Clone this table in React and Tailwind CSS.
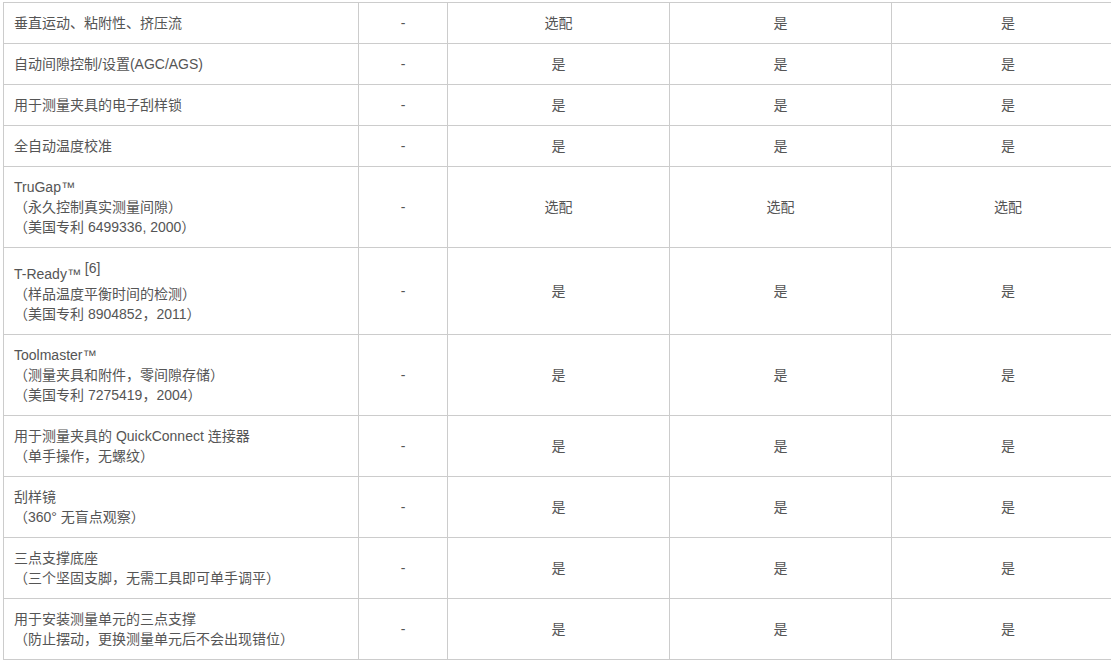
import React from 'react';

const rows = [
    { name: ['垂直运动、粘附性、挤压流'], vals: ['-', '选配', '是', '是'] },
    { name: ['自动间隙控制/设置(AGC/AGS)'], vals: ['-', '是', '是', '是'] },
    { name: ['用于测量夹具的电子刮样锁'], vals: ['-', '是', '是', '是'] },
    { name: ['全自动温度校准'], vals: ['-', '是', '是', '是'] },
    { name: ['TruGap™', '（永久控制真实测量间隙）', '（美国专利 6499336, 2000）'], vals: ['-', '选配', '选配', '选配'] },
    { name: ['T-Ready™', '（样品温度平衡时间的检测）', '（美国专利 8904852，2011）'], sup: '[6]', vals: ['-', '是', '是', '是'] },
    { name: ['Toolmaster™', '（测量夹具和附件，零间隙存储）', '（美国专利 7275419，2004）'], vals: ['-', '是', '是', '是'] },
    { name: ['用于测量夹具的 QuickConnect 连接器', '（单手操作，无螺纹）'], vals: ['-', '是', '是', '是'] },
    { name: ['刮样镜', '（360° 无盲点观察）'], vals: ['-', '是', '是', '是'] },
    { name: ['三点支撑底座', '（三个坚固支脚，无需工具即可单手调平）'], vals: ['-', '是', '是', '是'] },
    { name: ['用于安装测量单元的三点支撑', '（防止摆动，更换测量单元后不会出现错位）'], vals: ['-', '是', '是', '是'] },
];

const cell = 'border border-[#ccc] px-[10px] py-[10px] align-middle';

export default function App() {
    return (
        <div
            className="w-[1111px] h-[661px] overflow-hidden bg-white pl-[3px] pt-[2px] text-[14px] leading-[20px] text-[#555]"
            style={{ fontFamily: '"Liberation Sans", Arial, "Noto Sans CJK SC", sans-serif' }}
        >
            <table className="border-collapse table-fixed w-[1121px]">
                <colgroup>
                    <col className="w-[355px]" />
                    <col className="w-[89px]" />
                    <col className="w-[222px]" />
                    <col className="w-[222px]" />
                    <col className="w-[233px]" />
                </colgroup>
                <tbody>
                    {rows.map((row, i) => (
                        <tr key={i}>
                            <td className={cell}>
                                {row.name.map((line, j) => (
                                    <div key={j} className="whitespace-nowrap">
                                        {line}
                                        {j === 0 && row.sup && (
                                            <>
                                                {' '}
                                                <sup className="static align-super text-[14px] leading-[20px]">{row.sup}</sup>
                                            </>
                                        )}
                                    </div>
                                ))}
                            </td>
                            {row.vals.map((v, k) => (
                                <td key={k} className={cell + ' text-center'}>
                                    {v}
                                </td>
                            ))}
                        </tr>
                    ))}
                </tbody>
            </table>
        </div>
    );
}
